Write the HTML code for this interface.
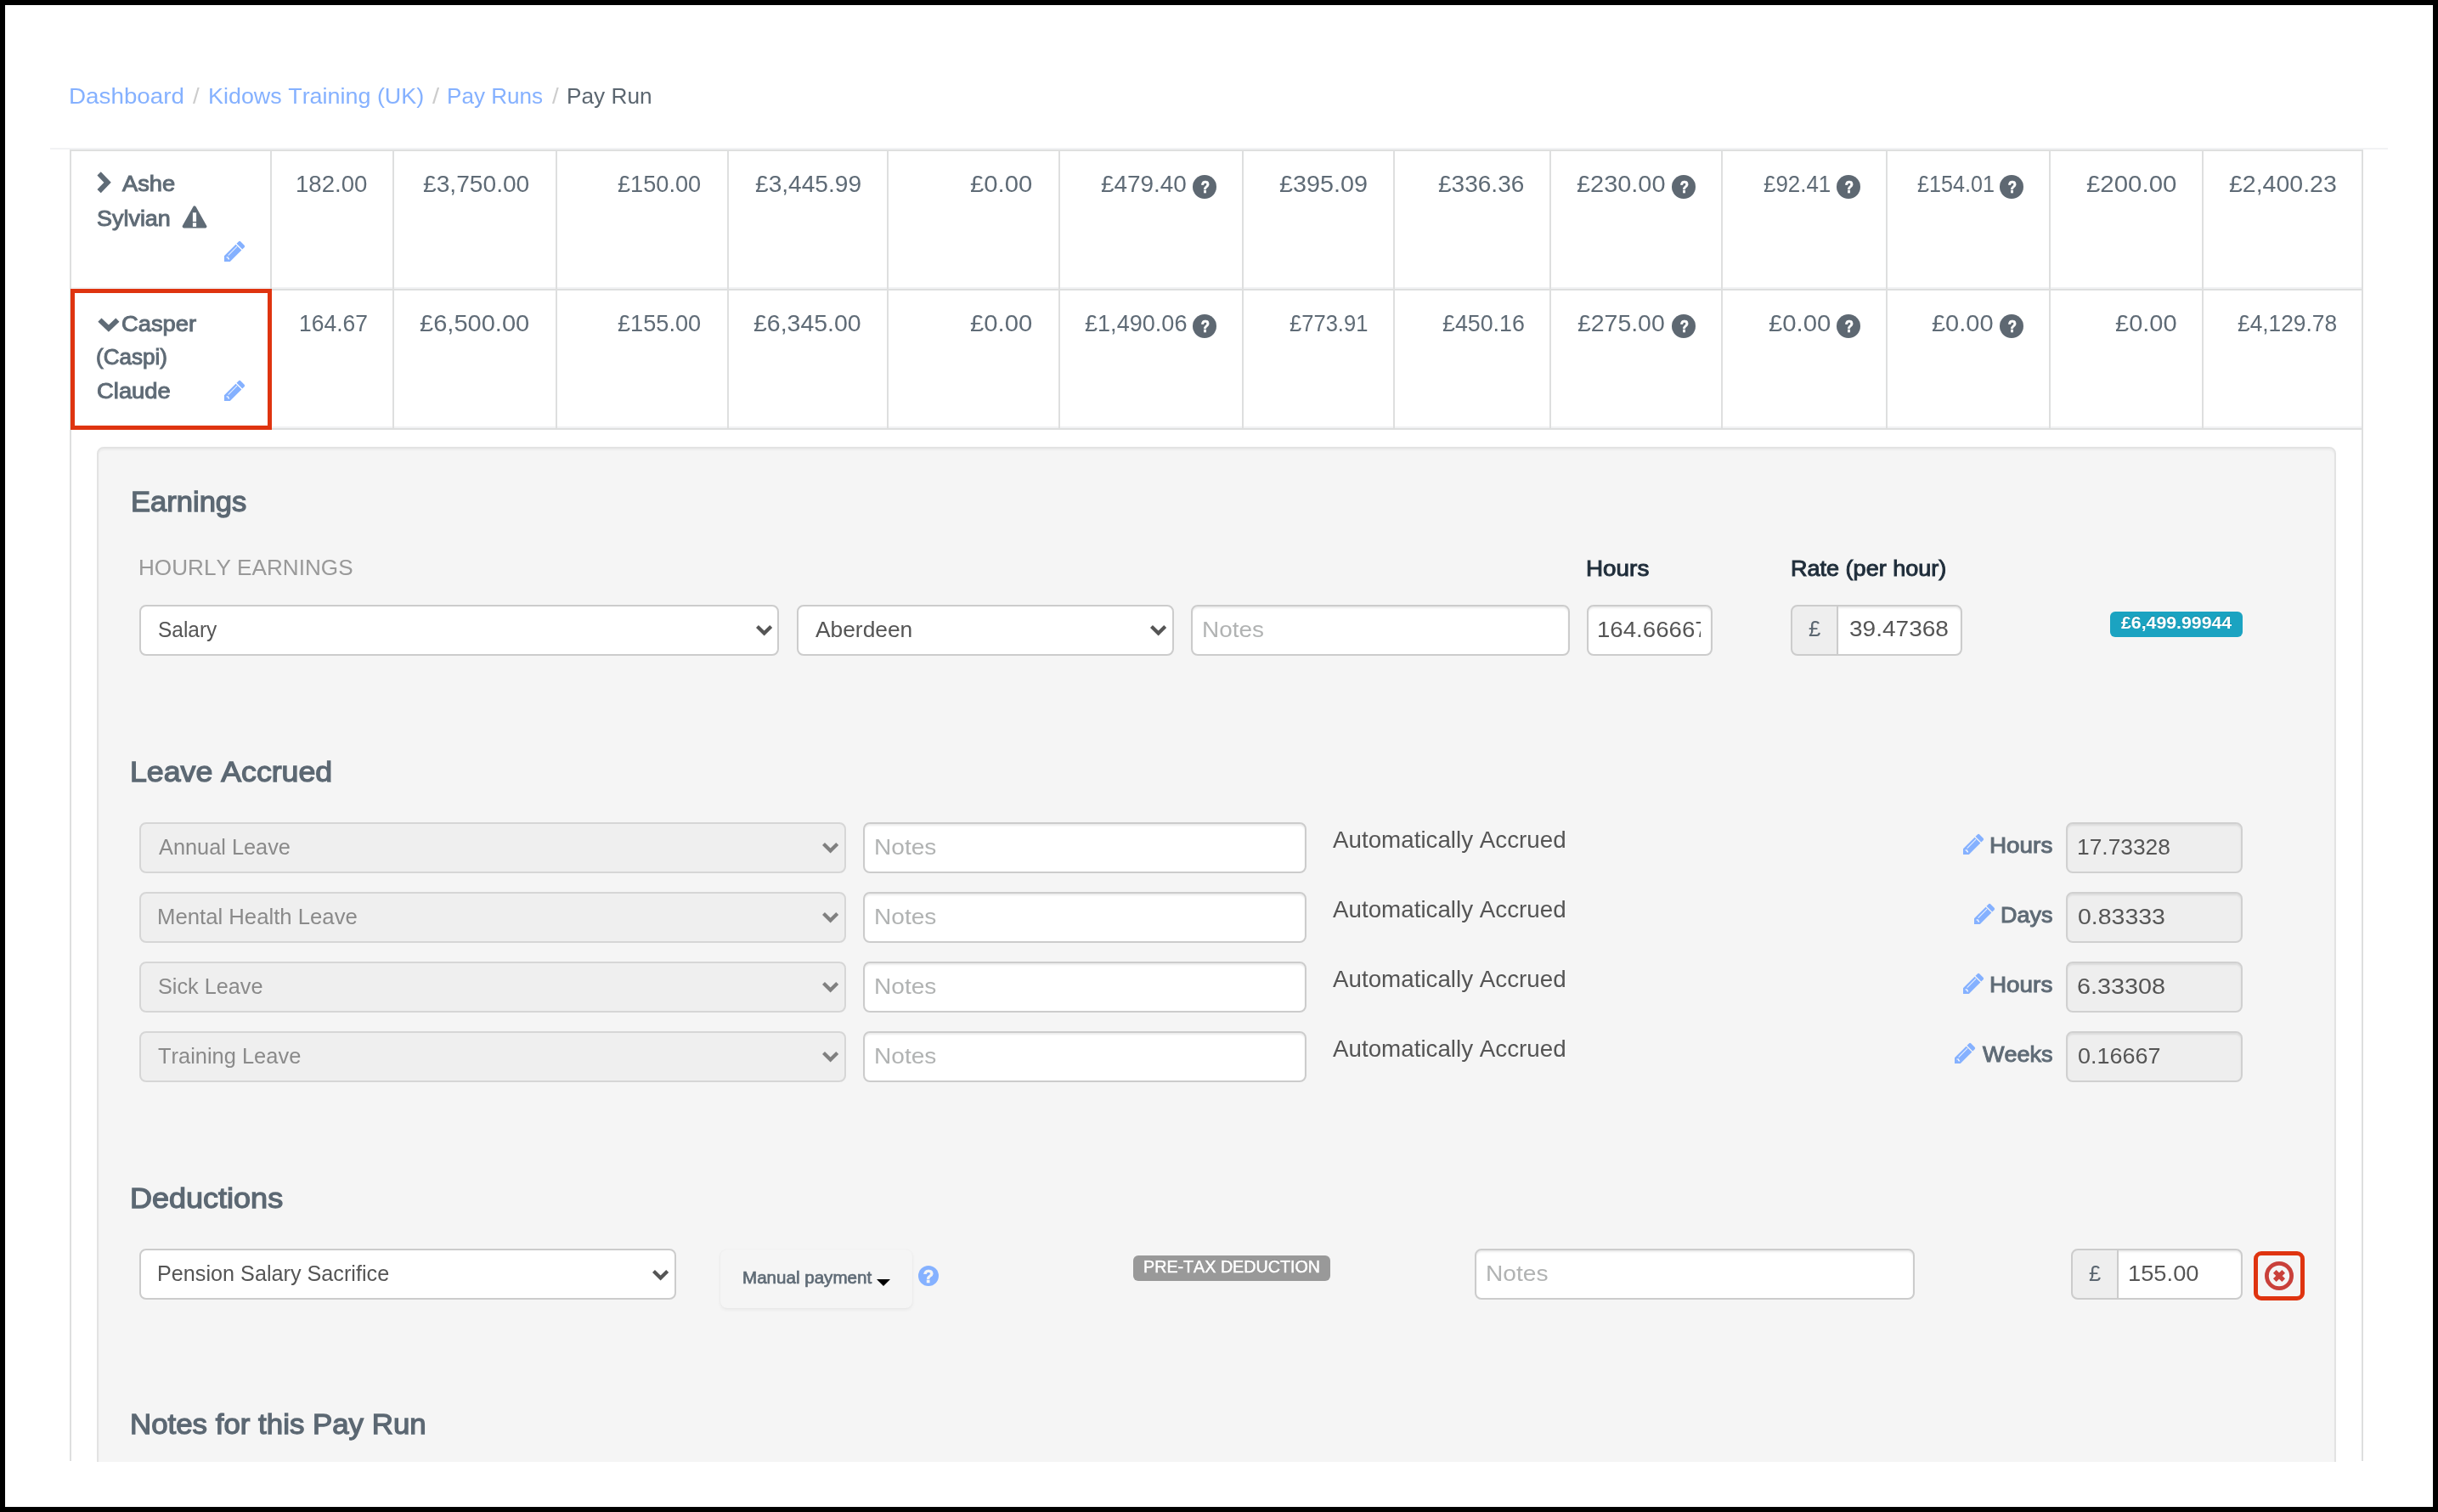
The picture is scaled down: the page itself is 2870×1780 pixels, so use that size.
<!DOCTYPE html>
<html lang="en"><head><meta charset="utf-8"><title>Pay Run</title>
<style>
html,body{margin:0;padding:0;background:#fff;}
body{width:2870px;height:1780px;position:relative;overflow:hidden;font-family:"Liberation Sans",sans-serif;font-kerning:none;}
.b{position:absolute;display:block;}
.t{position:absolute;white-space:nowrap;transform-origin:0 0;}
#frame{position:absolute;left:0;top:0;width:2870px;height:1780px;box-sizing:border-box;border:6px solid #000;z-index:10;pointer-events:none}
#wrap{position:absolute;left:0;top:0;width:2870px;height:1780px;will-change:transform}
</style></head><body><div id="wrap">
<div class="t" style="left:81.32px;top:94.99px;font-size:26px;line-height:36px;color:#85b1ff;transform:scaleX(1.0690);">Dashboard</div>
<div class="t" style="left:227.30px;top:94.99px;font-size:26px;line-height:36px;color:#ccc;transform:scaleX(1.0659);">/</div>
<div class="t" style="left:244.99px;top:94.99px;font-size:26px;line-height:36px;color:#85b1ff;transform:scaleX(1.0348);">Kidows Training (UK)</div>
<div class="t" style="left:508.60px;top:94.99px;font-size:26px;line-height:36px;color:#ccc;transform:scaleX(1.1213);">/</div>
<div class="t" style="left:526.36px;top:94.99px;font-size:26px;line-height:36px;color:#85b1ff;transform:scaleX(1.0032);">Pay Runs</div>
<div class="t" style="left:650.00px;top:94.99px;font-size:26px;line-height:36px;color:#ccc;transform:scaleX(1.0659);">/</div>
<div class="t" style="left:667.45px;top:94.99px;font-size:26px;line-height:36px;color:#5b6670;transform:scaleX(1.0083);">Pay Run</div>
<div class="b" style="left:59px;top:174px;width:2752px;height:2px;background:#f1f2f4"></div>
<div class="b" style="left:82px;top:176px;width:2700px;height:2px;background:#dedfdf"></div>
<div class="b" style="left:84px;top:338px;width:2696px;height:2px;background:#f1f2f4"></div>
<div class="b" style="left:82px;top:340px;width:2700px;height:2px;background:#dedfdf"></div>
<div class="b" style="left:84px;top:502px;width:2696px;height:2px;background:#f1f2f4"></div>
<div class="b" style="left:82px;top:504px;width:2700px;height:2px;background:#dedfdf"></div>
<div class="b" style="left:82px;top:176px;width:2px;height:1544px;background:#dedfdf"></div>
<div class="b" style="left:2780px;top:176px;width:2px;height:1544px;background:#dedfdf"></div>
<div class="b" style="left:318px;top:176px;width:2px;height:328px;background:#dedfdf"></div>
<div class="b" style="left:462px;top:176px;width:2px;height:328px;background:#dedfdf"></div>
<div class="b" style="left:654px;top:176px;width:2px;height:328px;background:#dedfdf"></div>
<div class="b" style="left:856px;top:176px;width:2px;height:328px;background:#dedfdf"></div>
<div class="b" style="left:1044px;top:176px;width:2px;height:328px;background:#dedfdf"></div>
<div class="b" style="left:1246px;top:176px;width:2px;height:328px;background:#dedfdf"></div>
<div class="b" style="left:1462px;top:176px;width:2px;height:328px;background:#dedfdf"></div>
<div class="b" style="left:1640px;top:176px;width:2px;height:328px;background:#dedfdf"></div>
<div class="b" style="left:1824px;top:176px;width:2px;height:328px;background:#dedfdf"></div>
<div class="b" style="left:2026px;top:176px;width:2px;height:328px;background:#dedfdf"></div>
<div class="b" style="left:2220px;top:176px;width:2px;height:328px;background:#dedfdf"></div>
<div class="b" style="left:2412px;top:176px;width:2px;height:328px;background:#dedfdf"></div>
<div class="b" style="left:2592px;top:176px;width:2px;height:328px;background:#dedfdf"></div>
<svg class="b" style="left:114px;top:202px" width="18" height="26" viewBox="0 0 18 26"><polyline points="2.6,2.4 12.6,12.8 2.6,23.2" fill="none" stroke="#5f6b76" stroke-width="6"/></svg>
<div class="t" style="left:143.56px;top:198.45px;font-size:26.4px;line-height:37px;color:#5f6b76;transform:scaleX(1.0342);-webkit-text-stroke:1.0px #5f6b76;">Ashe</div>
<div class="t" style="left:113.69px;top:238.65px;font-size:26.4px;line-height:37px;color:#5f6b76;transform:scaleX(1.0205);-webkit-text-stroke:1.0px #5f6b76;">Sylvian</div>
<svg class="b" style="left:214px;top:241.5px" width="30" height="27" viewBox="0 0 30 27"><path d="M15 2.2 L27.6 24.6 L2.4 24.6 Z" fill="#5f6b76" stroke="#5f6b76" stroke-width="3.6" stroke-linejoin="round"/><rect x="12.9" y="8.3" width="4.2" height="10.6" fill="#fff"/><rect x="12.9" y="20.3" width="4.2" height="4.6" fill="#fff"/></svg>
<svg class="b" style="left:262.8px;top:283.3px" width="27" height="27" viewBox="-1 -1 27 27"><g transform="translate(0 24) rotate(-45)"><path d="M0 0 L4.8 -4.8 L24 -4.8 L24 4.8 L4.8 4.8 Z" fill="#85b1ff"/><path d="M25.3 -4.8 H28.6 A1.8 1.8 0 0 1 30.4 -3 V3 A1.8 1.8 0 0 1 28.6 4.8 H25.3 Z" fill="#85b1ff"/><rect x="8.6" y="-2.5" width="14.6" height="1.1" fill="#fff" opacity=".8"/><path d="M5.2 -1.6 Q7.4 -0.6 6.2 0.4 Q5.2 1.2 6.6 2" fill="none" stroke="#fff" stroke-width="1.3" opacity=".9"/></g></svg>
<svg class="b" style="left:114.5px;top:373.5px" width="26" height="18" viewBox="0 0 26 18"><polyline points="2.4,2.6 12.9,12.6 23.4,2.6" fill="none" stroke="#5f6b76" stroke-width="6"/></svg>
<div class="t" style="left:142.83px;top:362.55px;font-size:26.4px;line-height:37px;color:#5f6b76;transform:scaleX(1.0353);-webkit-text-stroke:1.0px #5f6b76;">Casper</div>
<div class="t" style="left:113.28px;top:402.25px;font-size:26.4px;line-height:37px;color:#5f6b76;transform:scaleX(0.9879);-webkit-text-stroke:1.0px #5f6b76;">(Caspi)</div>
<div class="t" style="left:114.03px;top:442.35px;font-size:26.4px;line-height:37px;color:#5f6b76;transform:scaleX(1.0384);-webkit-text-stroke:1.0px #5f6b76;">Claude</div>
<svg class="b" style="left:262.5px;top:447.2px" width="27" height="27" viewBox="-1 -1 27 27"><g transform="translate(0 24) rotate(-45)"><path d="M0 0 L4.8 -4.8 L24 -4.8 L24 4.8 L4.8 4.8 Z" fill="#85b1ff"/><path d="M25.3 -4.8 H28.6 A1.8 1.8 0 0 1 30.4 -3 V3 A1.8 1.8 0 0 1 28.6 4.8 H25.3 Z" fill="#85b1ff"/><rect x="8.6" y="-2.5" width="14.6" height="1.1" fill="#fff" opacity=".8"/><path d="M5.2 -1.6 Q7.4 -0.6 6.2 0.4 Q5.2 1.2 6.6 2" fill="none" stroke="#fff" stroke-width="1.3" opacity=".9"/></g></svg>
<div class="b" style="left:83px;top:340px;width:237px;height:166px;border:5px solid #df3410;box-sizing:border-box"></div>
<div class="t" style="left:348.20px;top:197.71px;font-size:26.8px;line-height:38px;color:#5f6b76;transform:scaleX(1.0294);">182.00</div>
<div class="t" style="left:498.40px;top:197.71px;font-size:26.8px;line-height:38px;color:#5f6b76;transform:scaleX(1.0509);">£3,750.00</div>
<div class="t" style="left:726.73px;top:197.71px;font-size:26.8px;line-height:38px;color:#5f6b76;transform:scaleX(1.0129);">£150.00</div>
<div class="t" style="left:889.10px;top:197.71px;font-size:26.8px;line-height:38px;color:#5f6b76;transform:scaleX(1.0487);">£3,445.99</div>
<div class="t" style="left:1141.97px;top:197.71px;font-size:26.8px;line-height:38px;color:#5f6b76;transform:scaleX(1.0910);">£0.00</div>
<div class="t" style="left:1296.21px;top:197.71px;font-size:26.8px;line-height:38px;color:#5f6b76;transform:scaleX(1.0413);">£479.40</div>
<svg class="b" style="left:1404.0px;top:206.0px" width="28" height="28" viewBox="0 0 28 28"><circle cx="14.0" cy="14.0" r="14.0" fill="#5e6872"/><text transform="translate(14.9 21.25) scale(0.81 1)" x="0" y="0" text-anchor="middle" font-family="Liberation Sans, sans-serif" font-weight="700" font-size="20.8" fill="#fff" stroke="#fff" stroke-width=".7">?</text></svg>
<div class="t" style="left:1506.39px;top:197.71px;font-size:26.8px;line-height:38px;color:#5f6b76;transform:scaleX(1.0733);">£395.09</div>
<div class="t" style="left:1693.21px;top:197.71px;font-size:26.8px;line-height:38px;color:#5f6b76;transform:scaleX(1.0459);">£336.36</div>
<div class="t" style="left:1855.58px;top:197.71px;font-size:26.8px;line-height:38px;color:#5f6b76;transform:scaleX(1.0792);">£230.00</div>
<svg class="b" style="left:1967.8px;top:206.0px" width="28" height="28" viewBox="0 0 28 28"><circle cx="14.0" cy="14.0" r="14.0" fill="#5e6872"/><text transform="translate(14.9 21.25) scale(0.81 1)" x="0" y="0" text-anchor="middle" font-family="Liberation Sans, sans-serif" font-weight="700" font-size="20.8" fill="#fff" stroke="#fff" stroke-width=".7">?</text></svg>
<div class="t" style="left:2076.27px;top:197.71px;font-size:26.8px;line-height:38px;color:#5f6b76;transform:scaleX(0.9674);">£92.41</div>
<svg class="b" style="left:2162.2px;top:206.0px" width="28" height="28" viewBox="0 0 28 28"><circle cx="14.0" cy="14.0" r="14.0" fill="#5e6872"/><text transform="translate(14.9 21.25) scale(0.81 1)" x="0" y="0" text-anchor="middle" font-family="Liberation Sans, sans-serif" font-weight="700" font-size="20.8" fill="#fff" stroke="#fff" stroke-width=".7">?</text></svg>
<div class="t" style="left:2257.29px;top:197.71px;font-size:26.8px;line-height:38px;color:#5f6b76;transform:scaleX(0.9387);">£154.01</div>
<svg class="b" style="left:2354.0px;top:206.0px" width="28" height="28" viewBox="0 0 28 28"><circle cx="14.0" cy="14.0" r="14.0" fill="#5e6872"/><text transform="translate(14.9 21.25) scale(0.81 1)" x="0" y="0" text-anchor="middle" font-family="Liberation Sans, sans-serif" font-weight="700" font-size="20.8" fill="#fff" stroke="#fff" stroke-width=".7">?</text></svg>
<div class="t" style="left:2456.47px;top:197.71px;font-size:26.8px;line-height:38px;color:#5f6b76;transform:scaleX(1.0981);">£200.00</div>
<div class="t" style="left:2623.99px;top:197.71px;font-size:26.8px;line-height:38px;color:#5f6b76;transform:scaleX(1.0632);">£2,400.23</div>
<div class="t" style="left:351.88px;top:361.71px;font-size:26.8px;line-height:38px;color:#5f6b76;transform:scaleX(0.9875);">164.67</div>
<div class="t" style="left:494.48px;top:361.71px;font-size:26.8px;line-height:38px;color:#5f6b76;transform:scaleX(1.0841);">£6,500.00</div>
<div class="t" style="left:726.73px;top:361.71px;font-size:26.8px;line-height:38px;color:#5f6b76;transform:scaleX(1.0129);">£155.00</div>
<div class="t" style="left:887.19px;top:361.71px;font-size:26.8px;line-height:38px;color:#5f6b76;transform:scaleX(1.0629);">£6,345.00</div>
<div class="t" style="left:1141.97px;top:361.71px;font-size:26.8px;line-height:38px;color:#5f6b76;transform:scaleX(1.0910);">£0.00</div>
<div class="t" style="left:1276.73px;top:361.71px;font-size:26.8px;line-height:38px;color:#5f6b76;transform:scaleX(1.0103);">£1,490.06</div>
<svg class="b" style="left:1404.0px;top:370.0px" width="28" height="28" viewBox="0 0 28 28"><circle cx="14.0" cy="14.0" r="14.0" fill="#5e6872"/><text transform="translate(14.9 21.25) scale(0.81 1)" x="0" y="0" text-anchor="middle" font-family="Liberation Sans, sans-serif" font-weight="700" font-size="20.8" fill="#fff" stroke="#fff" stroke-width=".7">?</text></svg>
<div class="t" style="left:1517.88px;top:361.71px;font-size:26.8px;line-height:38px;color:#5f6b76;transform:scaleX(0.9535);">£773.91</div>
<div class="t" style="left:1697.64px;top:361.71px;font-size:26.8px;line-height:38px;color:#5f6b76;transform:scaleX(0.9996);">£450.16</div>
<div class="t" style="left:1857.40px;top:361.71px;font-size:26.8px;line-height:38px;color:#5f6b76;transform:scaleX(1.0603);">£275.00</div>
<svg class="b" style="left:1967.8px;top:370.0px" width="28" height="28" viewBox="0 0 28 28"><circle cx="14.0" cy="14.0" r="14.0" fill="#5e6872"/><text transform="translate(14.9 21.25) scale(0.81 1)" x="0" y="0" text-anchor="middle" font-family="Liberation Sans, sans-serif" font-weight="700" font-size="20.8" fill="#fff" stroke="#fff" stroke-width=".7">?</text></svg>
<div class="t" style="left:2082.17px;top:361.71px;font-size:26.8px;line-height:38px;color:#5f6b76;transform:scaleX(1.0926);">£0.00</div>
<svg class="b" style="left:2162.2px;top:370.0px" width="28" height="28" viewBox="0 0 28 28"><circle cx="14.0" cy="14.0" r="14.0" fill="#5e6872"/><text transform="translate(14.9 21.25) scale(0.81 1)" x="0" y="0" text-anchor="middle" font-family="Liberation Sans, sans-serif" font-weight="700" font-size="20.8" fill="#fff" stroke="#fff" stroke-width=".7">?</text></svg>
<div class="t" style="left:2273.88px;top:361.71px;font-size:26.8px;line-height:38px;color:#5f6b76;transform:scaleX(1.0818);">£0.00</div>
<svg class="b" style="left:2354.0px;top:370.0px" width="28" height="28" viewBox="0 0 28 28"><circle cx="14.0" cy="14.0" r="14.0" fill="#5e6872"/><text transform="translate(14.9 21.25) scale(0.81 1)" x="0" y="0" text-anchor="middle" font-family="Liberation Sans, sans-serif" font-weight="700" font-size="20.8" fill="#fff" stroke="#fff" stroke-width=".7">?</text></svg>
<div class="t" style="left:2490.18px;top:361.71px;font-size:26.8px;line-height:38px;color:#5f6b76;transform:scaleX(1.0834);">£0.00</div>
<div class="t" style="left:2633.55px;top:361.71px;font-size:26.8px;line-height:38px;color:#5f6b76;transform:scaleX(0.9821);">£4,129.78</div>
<div class="b" style="left:114px;top:526px;width:2636px;height:1300px;background:#f5f5f5;border:2px solid #e3e3e3;border-radius:8px;box-sizing:border-box;box-shadow:inset 0 2px 2px rgba(0,0,0,.04)"></div>
<div class="t" style="left:153.83px;top:566.96px;font-size:33.6px;line-height:47px;color:#5c6873;transform:scaleX(1.0289);-webkit-text-stroke:1.3px #5c6873;">Earnings</div>
<div class="t" style="left:162.86px;top:650.12px;font-size:26.5px;line-height:37px;color:#999;transform:scaleX(0.9857);">HOURLY EARNINGS</div>
<div class="t" style="left:1866.54px;top:650.95px;font-size:26.4px;line-height:37px;color:#1f2d3a;transform:scaleX(1.0556);-webkit-text-stroke:1.0px #1f2d3a;">Hours</div>
<div class="t" style="left:2107.79px;top:650.95px;font-size:26.4px;line-height:37px;color:#1f2d3a;transform:scaleX(1.0243);-webkit-text-stroke:1.0px #1f2d3a;">Rate (per hour)</div>
<div class="b" style="left:164px;top:712px;width:753px;height:60px;background:#fff;border:2px solid #ccc;border-radius:8px;box-sizing:border-box;"></div>
<div class="t" style="left:185.89px;top:723.06px;font-size:25.8px;line-height:36px;color:#555;transform:scaleX(0.9484);">Salary</div>
<svg class="b" style="left:889.6px;top:736.4px" width="20" height="14" viewBox="0 0 20 14"><polyline points="1.5,1.5 9.6,9.6 17.7,1.5" fill="none" stroke="#555" stroke-width="4.2"/></svg>
<div class="b" style="left:938px;top:712px;width:444px;height:60px;background:#fff;border:2px solid #ccc;border-radius:8px;box-sizing:border-box;"></div>
<div class="t" style="left:960.25px;top:723.06px;font-size:25.8px;line-height:36px;color:#555;transform:scaleX(1.0212);">Aberdeen</div>
<svg class="b" style="left:1354.4px;top:736.4px" width="20" height="14" viewBox="0 0 20 14"><polyline points="1.5,1.5 9.6,9.6 17.7,1.5" fill="none" stroke="#555" stroke-width="4.2"/></svg>
<div class="b" style="left:1402px;top:712px;width:446px;height:60px;background:#fff;border:2px solid #ccc;border-radius:8px;box-sizing:border-box;box-shadow:inset 0 2px 2px rgba(0,0,0,.075);"></div>
<div class="t" style="left:1414.81px;top:722.55px;font-size:26.4px;line-height:37px;color:#b1b3b3;transform:scaleX(1.0585);">Notes</div>
<div class="b" style="left:1868px;top:712px;width:148px;height:60px;background:#fff;border:2px solid #ccc;border-radius:8px;box-sizing:border-box;box-shadow:inset 0 2px 2px rgba(0,0,0,.075);"></div>
<div class="b" style="left:1870px;top:714px;width:132.4px;height:56px;overflow:hidden"><div class="t" style="left:9.69px;top:7.65px;font-size:26.4px;line-height:38px;color:#555;transform:scaleX(1.0473)">164.66667</div></div>
<div class="b" style="left:2108px;top:712px;width:56px;height:60px;background:#eee;border:2px solid #ccc;border-radius:8px 0 0 8px;box-sizing:border-box"></div>
<div class="t" style="left:2129.47px;top:722.15px;font-size:26.4px;line-height:37px;color:#5b6670;transform:scaleX(0.9716);">£</div>
<div class="b" style="left:2162px;top:712px;width:148px;height:60px;background:#fff;border:2px solid #ccc;border-radius:0 8px 8px 0;box-sizing:border-box;box-shadow:inset 0 2px 2px rgba(0,0,0,.075)"></div>
<div class="t" style="left:2176.73px;top:722.15px;font-size:26.4px;line-height:37px;color:#555;transform:scaleX(1.0624);">39.47368</div>
<div class="b" style="left:2484px;top:720px;width:156px;height:30px;background:#1ba3c1;border-radius:6px"></div>
<div class="t" style="left:2496.98px;top:718.22px;font-size:21px;line-height:29px;color:#fff;transform:scaleX(1.0130);font-weight:700;text-shadow:0 -1.5px 0 rgba(0,0,0,.22);">£6,499.99944</div>
<div class="t" style="left:153.06px;top:885.46px;font-size:33.6px;line-height:47px;color:#5c6873;transform:scaleX(1.0634);-webkit-text-stroke:1.3px #5c6873;">Leave Accrued</div>
<div class="b" style="left:164px;top:968px;width:832px;height:60px;background:#efefef;border:2px solid #d6d6d6;border-radius:8px;box-sizing:border-box;"></div>
<div class="t" style="left:186.75px;top:979.06px;font-size:25.8px;line-height:36px;color:#8a8a8a;transform:scaleX(0.9821);">Annual Leave</div>
<svg class="b" style="left:968.4px;top:992.4px" width="20" height="14" viewBox="0 0 20 14"><polyline points="1.5,1.5 9.6,9.6 17.7,1.5" fill="none" stroke="#808080" stroke-width="4.2"/></svg>
<div class="b" style="left:1016px;top:968px;width:522px;height:60px;background:#fff;border:2px solid #ccc;border-radius:8px;box-sizing:border-box;box-shadow:inset 0 2px 2px rgba(0,0,0,.075);"></div>
<div class="t" style="left:1029.19px;top:978.55px;font-size:26.4px;line-height:37px;color:#b1b3b3;transform:scaleX(1.0646);">Notes</div>
<div class="t" style="left:1568.85px;top:969.78px;font-size:27.2px;line-height:38px;color:#555;transform:scaleX(1.0210);">Automatically Accrued</div>
<div class="b" style="left:2432px;top:968px;width:208px;height:60px;background:#eee;border:2px solid #d0d0d0;border-radius:8px;box-sizing:border-box;box-shadow:inset 0 2px 2px rgba(0,0,0,.075);"></div>
<div class="t" style="left:2444.89px;top:978.75px;font-size:26.4px;line-height:37px;color:#555;transform:scaleX(0.9986);">17.73328</div>
<div class="t" style="left:2342.24px;top:976.85px;font-size:26.4px;line-height:37px;color:#5f6b76;transform:scaleX(1.0556);-webkit-text-stroke:1.0px #5f6b76;">Hours</div>
<svg class="b" style="left:2310.2px;top:981.2px" width="27" height="27" viewBox="-1 -1 27 27"><g transform="translate(0 24) rotate(-45)"><path d="M0 0 L4.8 -4.8 L24 -4.8 L24 4.8 L4.8 4.8 Z" fill="#85b1ff"/><path d="M25.3 -4.8 H28.6 A1.8 1.8 0 0 1 30.4 -3 V3 A1.8 1.8 0 0 1 28.6 4.8 H25.3 Z" fill="#85b1ff"/><rect x="8.6" y="-2.5" width="14.6" height="1.1" fill="#fff" opacity=".8"/><path d="M5.2 -1.6 Q7.4 -0.6 6.2 0.4 Q5.2 1.2 6.6 2" fill="none" stroke="#fff" stroke-width="1.3" opacity=".9"/></g></svg>
<div class="b" style="left:164px;top:1050px;width:832px;height:60px;background:#efefef;border:2px solid #d6d6d6;border-radius:8px;box-sizing:border-box;"></div>
<div class="t" style="left:184.69px;top:1061.06px;font-size:25.8px;line-height:36px;color:#8a8a8a;transform:scaleX(0.9966);">Mental Health Leave</div>
<svg class="b" style="left:968.4px;top:1074.4px" width="20" height="14" viewBox="0 0 20 14"><polyline points="1.5,1.5 9.6,9.6 17.7,1.5" fill="none" stroke="#808080" stroke-width="4.2"/></svg>
<div class="b" style="left:1016px;top:1050px;width:522px;height:60px;background:#fff;border:2px solid #ccc;border-radius:8px;box-sizing:border-box;box-shadow:inset 0 2px 2px rgba(0,0,0,.075);"></div>
<div class="t" style="left:1029.19px;top:1060.55px;font-size:26.4px;line-height:37px;color:#b1b3b3;transform:scaleX(1.0646);">Notes</div>
<div class="t" style="left:1568.85px;top:1051.78px;font-size:27.2px;line-height:38px;color:#555;transform:scaleX(1.0210);">Automatically Accrued</div>
<div class="b" style="left:2432px;top:1050px;width:208px;height:60px;background:#eee;border:2px solid #d0d0d0;border-radius:8px;box-sizing:border-box;box-shadow:inset 0 2px 2px rgba(0,0,0,.075);"></div>
<div class="t" style="left:2445.79px;top:1060.75px;font-size:26.4px;line-height:37px;color:#555;transform:scaleX(1.0790);">0.83333</div>
<div class="t" style="left:2355.10px;top:1058.85px;font-size:26.4px;line-height:37px;color:#5f6b76;transform:scaleX(1.0219);-webkit-text-stroke:1.0px #5f6b76;">Days</div>
<svg class="b" style="left:2322.8px;top:1063.2px" width="27" height="27" viewBox="-1 -1 27 27"><g transform="translate(0 24) rotate(-45)"><path d="M0 0 L4.8 -4.8 L24 -4.8 L24 4.8 L4.8 4.8 Z" fill="#85b1ff"/><path d="M25.3 -4.8 H28.6 A1.8 1.8 0 0 1 30.4 -3 V3 A1.8 1.8 0 0 1 28.6 4.8 H25.3 Z" fill="#85b1ff"/><rect x="8.6" y="-2.5" width="14.6" height="1.1" fill="#fff" opacity=".8"/><path d="M5.2 -1.6 Q7.4 -0.6 6.2 0.4 Q5.2 1.2 6.6 2" fill="none" stroke="#fff" stroke-width="1.3" opacity=".9"/></g></svg>
<div class="b" style="left:164px;top:1132px;width:832px;height:60px;background:#efefef;border:2px solid #d6d6d6;border-radius:8px;box-sizing:border-box;"></div>
<div class="t" style="left:185.65px;top:1143.06px;font-size:25.8px;line-height:36px;color:#8a8a8a;transform:scaleX(0.9791);">Sick Leave</div>
<svg class="b" style="left:968.4px;top:1156.4px" width="20" height="14" viewBox="0 0 20 14"><polyline points="1.5,1.5 9.6,9.6 17.7,1.5" fill="none" stroke="#808080" stroke-width="4.2"/></svg>
<div class="b" style="left:1016px;top:1132px;width:522px;height:60px;background:#fff;border:2px solid #ccc;border-radius:8px;box-sizing:border-box;box-shadow:inset 0 2px 2px rgba(0,0,0,.075);"></div>
<div class="t" style="left:1029.19px;top:1142.55px;font-size:26.4px;line-height:37px;color:#b1b3b3;transform:scaleX(1.0646);">Notes</div>
<div class="t" style="left:1568.85px;top:1133.78px;font-size:27.2px;line-height:38px;color:#555;transform:scaleX(1.0210);">Automatically Accrued</div>
<div class="b" style="left:2432px;top:1132px;width:208px;height:60px;background:#eee;border:2px solid #d0d0d0;border-radius:8px;box-sizing:border-box;box-shadow:inset 0 2px 2px rgba(0,0,0,.075);"></div>
<div class="t" style="left:2445.44px;top:1142.75px;font-size:26.4px;line-height:37px;color:#555;transform:scaleX(1.0910);">6.33308</div>
<div class="t" style="left:2342.24px;top:1140.85px;font-size:26.4px;line-height:37px;color:#5f6b76;transform:scaleX(1.0556);-webkit-text-stroke:1.0px #5f6b76;">Hours</div>
<svg class="b" style="left:2310.2px;top:1145.2px" width="27" height="27" viewBox="-1 -1 27 27"><g transform="translate(0 24) rotate(-45)"><path d="M0 0 L4.8 -4.8 L24 -4.8 L24 4.8 L4.8 4.8 Z" fill="#85b1ff"/><path d="M25.3 -4.8 H28.6 A1.8 1.8 0 0 1 30.4 -3 V3 A1.8 1.8 0 0 1 28.6 4.8 H25.3 Z" fill="#85b1ff"/><rect x="8.6" y="-2.5" width="14.6" height="1.1" fill="#fff" opacity=".8"/><path d="M5.2 -1.6 Q7.4 -0.6 6.2 0.4 Q5.2 1.2 6.6 2" fill="none" stroke="#fff" stroke-width="1.3" opacity=".9"/></g></svg>
<div class="b" style="left:164px;top:1214px;width:832px;height:60px;background:#efefef;border:2px solid #d6d6d6;border-radius:8px;box-sizing:border-box;"></div>
<div class="t" style="left:186.23px;top:1225.06px;font-size:25.8px;line-height:36px;color:#8a8a8a;transform:scaleX(0.9861);">Training Leave</div>
<svg class="b" style="left:968.4px;top:1238.4px" width="20" height="14" viewBox="0 0 20 14"><polyline points="1.5,1.5 9.6,9.6 17.7,1.5" fill="none" stroke="#808080" stroke-width="4.2"/></svg>
<div class="b" style="left:1016px;top:1214px;width:522px;height:60px;background:#fff;border:2px solid #ccc;border-radius:8px;box-sizing:border-box;box-shadow:inset 0 2px 2px rgba(0,0,0,.075);"></div>
<div class="t" style="left:1029.19px;top:1224.55px;font-size:26.4px;line-height:37px;color:#b1b3b3;transform:scaleX(1.0646);">Notes</div>
<div class="t" style="left:1568.85px;top:1215.78px;font-size:27.2px;line-height:38px;color:#555;transform:scaleX(1.0210);">Automatically Accrued</div>
<div class="b" style="left:2432px;top:1214px;width:208px;height:60px;background:#eee;border:2px solid #d0d0d0;border-radius:8px;box-sizing:border-box;box-shadow:inset 0 2px 2px rgba(0,0,0,.075);"></div>
<div class="t" style="left:2445.85px;top:1224.75px;font-size:26.4px;line-height:37px;color:#555;transform:scaleX(1.0229);">0.16667</div>
<div class="t" style="left:2333.99px;top:1222.85px;font-size:26.4px;line-height:37px;color:#5f6b76;transform:scaleX(1.0234);-webkit-text-stroke:1.0px #5f6b76;">Weeks</div>
<svg class="b" style="left:2300.4px;top:1227.2px" width="27" height="27" viewBox="-1 -1 27 27"><g transform="translate(0 24) rotate(-45)"><path d="M0 0 L4.8 -4.8 L24 -4.8 L24 4.8 L4.8 4.8 Z" fill="#85b1ff"/><path d="M25.3 -4.8 H28.6 A1.8 1.8 0 0 1 30.4 -3 V3 A1.8 1.8 0 0 1 28.6 4.8 H25.3 Z" fill="#85b1ff"/><rect x="8.6" y="-2.5" width="14.6" height="1.1" fill="#fff" opacity=".8"/><path d="M5.2 -1.6 Q7.4 -0.6 6.2 0.4 Q5.2 1.2 6.6 2" fill="none" stroke="#fff" stroke-width="1.3" opacity=".9"/></g></svg>
<div class="t" style="left:153.04px;top:1387.16px;font-size:33.6px;line-height:47px;color:#5c6873;transform:scaleX(1.0724);-webkit-text-stroke:1.3px #5c6873;">Deductions</div>
<div class="b" style="left:164px;top:1470px;width:632px;height:60px;background:#fff;border:2px solid #ccc;border-radius:8px;box-sizing:border-box;"></div>
<div class="t" style="left:184.73px;top:1481.06px;font-size:25.8px;line-height:36px;color:#555;transform:scaleX(0.9770);">Pension Salary Sacrifice</div>
<svg class="b" style="left:768.4px;top:1494.5px" width="20" height="14" viewBox="0 0 20 14"><polyline points="1.5,1.5 9.6,9.6 17.7,1.5" fill="none" stroke="#555" stroke-width="4.2"/></svg>
<div class="b" style="left:848px;top:1470.5px;width:226px;height:69px;background:#f5f5f5;border-radius:8px;box-shadow:0 2px 4px rgba(0,0,0,.06), 0 0 2px rgba(0,0,0,.04)"></div>
<div class="t" style="left:873.95px;top:1488.52px;font-size:21px;line-height:29px;color:#5f6b76;transform:scaleX(0.9800);-webkit-text-stroke:0.7px #5f6b76;">Manual payment</div>
<div class="b" style="left:1032px;top:1506px;width:0;height:0;border-left:8px solid transparent;border-right:8px solid transparent;border-top:8px solid #000"></div>
<svg class="b" style="left:1081.0px;top:1490.0px" width="24" height="24" viewBox="0 0 24 24"><circle cx="12.0" cy="12.0" r="12.0" fill="#85b1ff"/><text transform="translate(12.0 20.3) scale(0.9 1)" x="0" y="0" text-anchor="middle" font-family="Liberation Sans, sans-serif" font-weight="700" font-size="22.9" fill="#f5f5f5" stroke="#f5f5f5" stroke-width=".7">?</text></svg>
<div class="b" style="left:1334px;top:1478px;width:232px;height:30px;background:#999;border-radius:6px"></div>
<div class="t" style="left:1345.78px;top:1476.97px;font-size:20.3px;line-height:28px;color:#fff;transform:scaleX(0.9717);text-shadow:0 -1.5px 0 rgba(0,0,0,.2);-webkit-text-stroke:0.5px #fff;">PRE-TAX DEDUCTION</div>
<div class="b" style="left:1736px;top:1470px;width:518px;height:60px;background:#fff;border:2px solid #ccc;border-radius:8px;box-sizing:border-box;box-shadow:inset 0 2px 2px rgba(0,0,0,.075);"></div>
<div class="t" style="left:1748.99px;top:1480.75px;font-size:26.4px;line-height:37px;color:#b1b3b3;transform:scaleX(1.0677);">Notes</div>
<div class="b" style="left:2438px;top:1470px;width:56px;height:60px;background:#eee;border:2px solid #ccc;border-radius:8px 0 0 8px;box-sizing:border-box"></div>
<div class="t" style="left:2459.28px;top:1480.85px;font-size:26.4px;line-height:37px;color:#5b6670;transform:scaleX(0.9641);">£</div>
<div class="b" style="left:2492px;top:1470px;width:148px;height:60px;background:#fff;border:2px solid #ccc;border-radius:0 8px 8px 0;box-sizing:border-box;box-shadow:inset 0 2px 2px rgba(0,0,0,.075)"></div>
<div class="t" style="left:2505.02px;top:1480.85px;font-size:26.4px;line-height:37px;color:#555;transform:scaleX(1.0347);">155.00</div>
<div class="b" style="left:2653px;top:1473px;width:60px;height:58px;border:5px solid #df3410;border-radius:9px;box-sizing:border-box"></div>
<svg class="b" style="left:2666.0px;top:1485.0px" width="34" height="34" viewBox="0 0 34 34"><circle cx="17.0" cy="17.0" r="14.6" fill="none" stroke="#c9403a" stroke-width="4.8"/><path d="M11.8 11.8 L22.2 22.2 M22.2 11.8 L11.8 22.2" stroke="#c9403a" stroke-width="5.2"/></svg>
<div class="t" style="left:153.31px;top:1653.36px;font-size:33.6px;line-height:47px;color:#5c6873;transform:scaleX(1.0379);-webkit-text-stroke:1.3px #5c6873;">Notes for this Pay Run</div>
<div class="b" style="left:0px;top:1720.5px;width:2870px;height:60px;background:#fff"></div>
</div><div id="frame"></div>
</body></html>
